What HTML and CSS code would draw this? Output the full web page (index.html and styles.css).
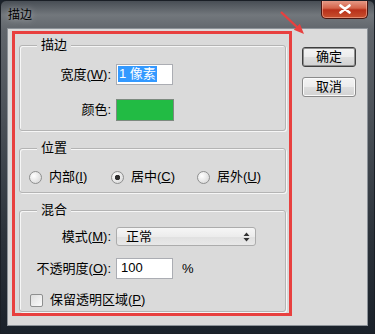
FILE: index.html
```html
<!DOCTYPE html>
<html lang="zh-CN">
<head>
    <meta charset="UTF-8">
    <meta name="viewport" content="width=device-width, initial-scale=1.0">
    <title>描边</title>
    <link rel="stylesheet" href="styles.css">
</head>
<body>
    <div class="window">
        <div class="titlebar">
            <span class="title">描边</span>
            <button class="close" aria-label="关闭">
                <svg width="14" height="10" viewBox="0 0 14 10">
                    <path d="M2.5 1.5 L11.5 8.5 M11.5 1.5 L2.5 8.5" stroke="#fff" stroke-width="2.6" stroke-linecap="round"/>
                </svg>
            </button>
        </div>

        <div class="client">
            <!-- Left panel, highlighted with a red frame -->
            <div class="panel">
                <div class="group group-stroke">
                    <div class="group-title">描边</div>
                    <div class="fields">
                        <label>宽度(<u>W</u>):</label>
                        <div class="textbox"><span class="selected">1 像素</span></div>
                        <label>颜色:</label>
                        <div class="swatch"></div>
                    </div>
                </div>

                <div class="group group-position">
                    <div class="group-title">位置</div>
                    <div class="radios">
                        <div class="radio-item"><span class="radio"></span><span>内部(<u>I</u>)</span></div>
                        <div class="radio-item"><span class="radio checked"></span><span>居中(<u>C</u>)</span></div>
                        <div class="radio-item"><span class="radio"></span><span>居外(<u>U</u>)</span></div>
                    </div>
                </div>

                <div class="group group-blend">
                    <div class="group-title">混合</div>
                    <div class="fields blend-fields">
                        <label>模式(<u>M</u>):</label>
                        <div class="select">
                            <span>正常</span>
                            <svg width="7" height="10" viewBox="0 0 7 10">
                                <path d="M0.5 4 L3.5 0.5 L6.5 4 Z M0.5 6 L3.5 9.5 L6.5 6 Z" fill="#333"/>
                            </svg>
                        </div>
                        <label>不透明度(<u>O</u>):</label>
                        <div class="opacity-row">
                            <div class="textbox"><span class="value">100</span></div>
                            <span class="unit">%</span>
                        </div>
                    </div>
                    <div class="check-row">
                        <span class="checkbox"></span><span>保留透明区域(<u>P</u>)</span>
                    </div>
                </div>
            </div>

            <div class="actions">
                <button class="btn default">确定</button>
                <button class="btn">取消</button>
            </div>
        </div>

        <!-- annotation arrow pointing at the dialog -->
        <svg class="arrow" width="375" height="334" viewBox="0 0 375 334">
            <line x1="281" y1="12" x2="298" y2="28" stroke="#e8403f" stroke-width="2.4"/>
            <polygon points="304,34 293.8,29.8 299.8,23.8" fill="#e8403f"/>
        </svg>
    </div>
</body>
</html>
```

FILE: styles.css
```css
body {
    margin: 0;
    padding: 0;
    font-family: "Liberation Sans", "Noto Sans CJK SC", sans-serif;
    font-size: 13px;
    line-height: 16px;
    color: #000;
    background: #1b222b;
}
.window {
    position: relative;
    width: 375px;
    height: 334px;
    box-sizing: border-box;
    border: 1px solid #1a1f26;
    border-radius: 6px 6px 0 0;
    background: linear-gradient(180deg, #484e55 0px, #72777c 14px, #60656b 30px, #4a5057 120px, #2d343c 230px, #1a212a 334px);
    overflow: hidden;
}
.titlebar {
    display: flex;
    align-items: flex-start;
    height: 28px;
}
.title {
    font-size: 12px;
    padding: 6px 0 0 7px;
    color: #000;
    text-shadow: 0 0 6px rgba(255, 255, 255, 0.5);
}
.close {
    margin: -1px 6px 0 auto;
    width: 47px;
    height: 19px;
    padding: 0;
    border: 1px solid #4a1510;
    border-top: none;
    border-radius: 0 0 5px 5px;
    background: linear-gradient(180deg, #e8a08e 0%, #d4644a 45%, #b8301a 55%, #c8502e 100%);
    box-shadow: inset 0 0 0 1px rgba(255, 200, 180, 0.5);
    display: flex;
    align-items: center;
    justify-content: center;
}
.client {
    display: flex;
    margin: 0 7px;
    height: 296px;
    background: #dadada;
    box-shadow: 0 0 0 1px #8c9298;
}
.panel {
    margin: 2px 0 0 4px;
    width: 280px;
    height: 285px;
    box-sizing: border-box;
    border: 3px solid #e8403f;
    padding: 11px 0 0 4px;
}
.group {
    width: 267px;
    box-sizing: border-box;
    border: 1px solid #b4b4b4;
    border-radius: 3px;
    box-shadow: inset 1px 1px 0 #f6f6f6, 1px 1px 0 #f6f6f6;
}
.group + .group {
    margin-top: 17px;
}
.group-stroke {
    height: 86px;
}
.group-position {
    height: 45px;
}
.group-blend {
    height: 102px;
}
.group-title {
    width: fit-content;
    margin: -9px 0 0 17px;
    padding: 0 4px;
    background: #dadada;
}
.fields {
    display: grid;
    grid-template-columns: 91px auto;
    column-gap: 5px;
    row-gap: 14px;
    margin-top: 11px;
    justify-items: start;
    align-items: center;
}
.fields label {
    justify-self: end;
}
.textbox {
    width: 57px;
    height: 21px;
    box-sizing: border-box;
    border: 1px solid #abadb3;
    background: #fff;
    padding: 1px 1px 0;
}
.selected {
    display: inline-block;
    background: #3399ff;
    color: #fff;
    padding: 0 1px;
}
.value {
    padding-left: 3px;
}
.swatch {
    width: 58px;
    height: 22px;
    box-sizing: border-box;
    border: 1px solid #7c8a7f;
    background: #22bb44;
}
.radios {
    display: flex;
    align-items: center;
    margin: 13px 0 0 9px;
}
.radio-item {
    display: flex;
    align-items: center;
    gap: 7px;
    width: 82px;
}
.radio-item + .radio-item {
    width: 86px;
}
.radio {
    width: 13px;
    height: 13px;
    box-sizing: border-box;
    border: 1px solid #8e8f8f;
    border-radius: 50%;
    background: radial-gradient(circle at 35% 35%, #ffffff, #d2d2d2);
}
.radio.checked {
    background: radial-gradient(circle, #2f2f2f 0 2.4px, transparent 3px), radial-gradient(circle at 35% 35%, #ffffff, #d2d2d2);
}
.blend-fields {
    margin-top: 9px;
    row-gap: 12px;
}
.select {
    width: 140px;
    height: 19px;
    box-sizing: border-box;
    border: 1px solid #acacac;
    border-radius: 3px;
    background: linear-gradient(180deg, #f6f6f6 0%, #ececec 50%, #e0e0e0 51%, #e8e8e8 100%);
    display: flex;
    align-items: center;
    justify-content: space-between;
    padding: 0 5px 0 9px;
}
.opacity-row {
    display: flex;
    align-items: center;
}
.unit {
    margin-left: 9px;
    padding-top: 1px;
}
.check-row {
    display: flex;
    align-items: center;
    gap: 7px;
    margin: 13px 0 0 10px;
}
.checkbox {
    width: 13px;
    height: 13px;
    box-sizing: border-box;
    border: 1px solid #8e8f8f;
    border-radius: 2px;
    background: linear-gradient(135deg, #dedede, #fbfbfb);
}
.actions {
    display: flex;
    flex-direction: column;
    gap: 10px;
    margin: 18px 0 0 10px;
}
.btn {
    width: 54px;
    height: 20px;
    padding: 0;
    font-family: inherit;
    font-size: 13px;
    line-height: 16px;
    color: #000;
    border: 1px solid #8a8a8a;
    border-radius: 3px;
    background: linear-gradient(180deg, #f4f4f4 0%, #ececec 50%, #dedede 51%, #d2d2d2 100%);
    box-shadow: inset 0 0 0 1px #fafafa;
}
.btn.default {
    border: 1px solid #3e3e3e;
    box-shadow: inset 0 0 0 1px #8f8f8f;
}
.arrow {
    position: absolute;
    left: -1px;
    top: -1px;
    pointer-events: none;
}
```
